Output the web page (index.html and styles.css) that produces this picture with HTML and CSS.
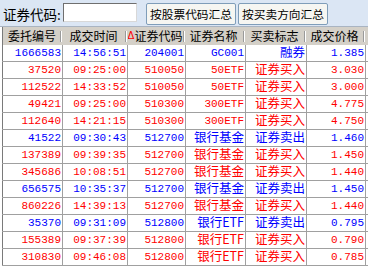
FILE: index.html
```html
<!DOCTYPE html>
<html>
<head>
<meta charset="utf-8">
<link rel="stylesheet" href="styles.css">
</head>
<body>
<div class="topbar">
  <span class="label">证券代码:</span>
  <span class="input"></span>
  <button class="btn btn-first">按股票代码汇总</button>
  <button class="btn">按买卖方向汇总</button>
</div>
<table class="grid">
  <colgroup>
    <col class="c1"><col class="c2"><col class="c3"><col class="c4"><col class="c5"><col class="c6"><col class="c7">
  </colgroup>
  <thead>
    <tr>
      <th class="h1">委托编号</th>
      <th class="h2">成交时间</th>
      <th class="h3"><span class="tri">Δ</span>证券代码</th>
      <th class="h4">证券名称</th>
      <th class="h5">买卖标志</th>
      <th class="h6">成交价格</th>
      <th class="h7"></th>
    </tr>
  </thead>
  <tbody>
    <tr class="blue"><td>1666583</td><td>14:56:51</td><td>204001</td><td>GC001</td><td><span class="cn">融券</span></td><td>1.385</td><td></td></tr>
    <tr class="red"><td>37520</td><td>09:25:00</td><td>510050</td><td>50ETF</td><td><span class="cn">证券买入</span></td><td>3.030</td><td></td></tr>
    <tr class="red"><td>112522</td><td>14:33:52</td><td>510050</td><td>50ETF</td><td><span class="cn">证券买入</span></td><td>3.000</td><td></td></tr>
    <tr class="red"><td>49421</td><td>09:25:00</td><td>510300</td><td>300ETF</td><td><span class="cn">证券买入</span></td><td>4.775</td><td></td></tr>
    <tr class="red"><td>112640</td><td>14:21:15</td><td>510300</td><td>300ETF</td><td><span class="cn">证券买入</span></td><td>4.750</td><td></td></tr>
    <tr class="blue"><td>41522</td><td>09:30:43</td><td>512700</td><td><span class="cn">银行基金</span></td><td><span class="cn">证券卖出</span></td><td>1.460</td><td></td></tr>
    <tr class="red"><td>137389</td><td>09:39:35</td><td>512700</td><td><span class="cn">银行基金</span></td><td><span class="cn">证券买入</span></td><td>1.450</td><td></td></tr>
    <tr class="red"><td>345686</td><td>10:08:51</td><td>512700</td><td><span class="cn">银行基金</span></td><td><span class="cn">证券买入</span></td><td>1.440</td><td></td></tr>
    <tr class="blue"><td>656575</td><td>10:35:37</td><td>512700</td><td><span class="cn">银行基金</span></td><td><span class="cn">证券卖出</span></td><td>1.450</td><td></td></tr>
    <tr class="red"><td>860226</td><td>14:39:13</td><td>512700</td><td><span class="cn">银行基金</span></td><td><span class="cn">证券买入</span></td><td>1.440</td><td></td></tr>
    <tr class="blue"><td>35370</td><td>09:31:09</td><td>512800</td><td><span class="cn">银行ETF</span></td><td><span class="cn">证券卖出</span></td><td>0.795</td><td></td></tr>
    <tr class="red"><td>155389</td><td>09:37:39</td><td>512800</td><td><span class="cn">银行ETF</span></td><td><span class="cn">证券买入</span></td><td>0.790</td><td></td></tr>
    <tr class="red"><td>310830</td><td>09:46:08</td><td>512800</td><td><span class="cn">银行ETF</span></td><td><span class="cn">证券买入</span></td><td>0.785</td><td></td></tr>
  </tbody>
</table>
</body>
</html>
```

FILE: styles.css
```css
html, body {
  margin: 0;
  padding: 0;
  background: #ffffff;
  overflow: hidden;
}
body {
  width: 368px;
  height: 272px;
  font-family: "Noto Sans CJK SC", sans-serif;
}
.topbar {
  display: flex;
  align-items: flex-start;
  height: 27px;
  padding-left: 3px;
  background: #dbe6f4;
  border-bottom: 1px solid #a9b4c2;
  box-sizing: border-box;
}
.label {
  font-size: 13.5px;
  line-height: 16px;
  color: #000;
  width: 60px;
  margin-top: 6px;
}
.input {
  width: 72px;
  height: 17px;
  background: #fff;
  border: 1px solid #6f6f6f;
  border-right-color: #d8d8d8;
  border-bottom-color: #d8d8d8;
  margin-top: 3px;
}
.btn {
  height: 22px;
  width: 90px;
  padding: 0;
  margin: 3px 0 0 0;
  background: #f6f6f2;
  border: 1px solid #7f9db9;
  border-radius: 2px;
  font-family: "Noto Sans CJK SC", sans-serif;
  font-size: 11.7px;
  line-height: 18px;
  color: #000;
  white-space: nowrap;
  overflow: hidden;
}
.btn-first {
  margin-left: 9px;
}
.btn + .btn {
  margin-left: 2px;
}
.grid {
  border-collapse: collapse;
  table-layout: fixed;
  margin-left: 2px;
  width: 380px;
  border-left: 1px solid #7a7a7a;
}
.c1 { width: 60px; }
.c2 { width: 65px; }
.c3 { width: 58px; }
.c4 { width: 60px; }
.c5 { width: 61px; }
.c6 { width: 59px; }
.c7 { width: 17px; }
.grid th {
  height: 18px;
  padding: 0 0 0 5px;
  background:
    linear-gradient(#9a9a9a, #9a9a9a) right 2px top 4px / 1px 11px no-repeat,
    linear-gradient(#ffffff, #ffffff) right 1px top 4px / 1px 11px no-repeat,
    #d4d0c8;
  font-weight: normal;
  font-size: 12px;
  line-height: 18px;
  text-align: left;
  color: #000;
  white-space: nowrap;
  overflow: hidden;
  box-sizing: border-box;
}
.grid th.h1 { padding-left: 5px; }
.grid th.h2 { padding-left: 7px; }
.grid th.h3 { padding-left: 0; }
.grid th.h4 { padding-left: 4px; }
.grid th.h5 { padding-left: 5px; }
.grid th.h6 { padding-left: 4px; }
.tri {
  color: #ff0000;
  font-family: "DejaVu Sans", sans-serif;
  font-size: 10px;
  display: inline-block;
  width: 7px;
  vertical-align: top;
  line-height: 18px;
}
.grid td {
  height: 16px;
  padding: 0 1px 0 0;
  border-right: 1px solid #a0a0a0;
  border-bottom: 1px solid #a0a0a0;
  font-family: "Liberation Mono", monospace;
  font-size: 11px;
  line-height: 16px;
  text-align: right;
  white-space: nowrap;
  box-sizing: border-box;
}
.grid td:last-child {
  border-right: none;
}
.cn {
  display: inline-block;
  height: 16px;
  font-family: "Noto Sans CJK SC", sans-serif;
  font-size: 12.5px;
  line-height: 14px;
  vertical-align: top;
}
.blue td { color: #0000ff; }
.red td { color: #ff0000; }
```
